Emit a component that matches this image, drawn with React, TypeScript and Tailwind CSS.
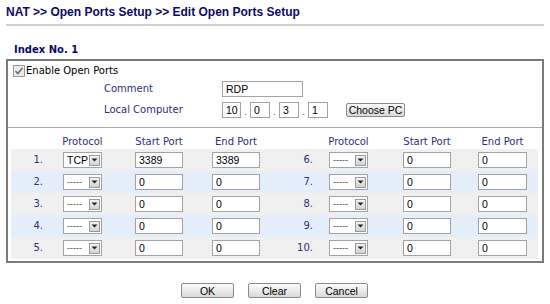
const rows = [
  [{ n: '1.', p: 'TCP', s: '3389', e: '3389' }, { n: '6.', p: '-----', s: '0', e: '0' }],
  [{ n: '2.', p: '-----', s: '0', e: '0' }, { n: '7.', p: '-----', s: '0', e: '0' }],
  [{ n: '3.', p: '-----', s: '0', e: '0' }, { n: '8.', p: '-----', s: '0', e: '0' }],
  [{ n: '4.', p: '-----', s: '0', e: '0' }, { n: '9.', p: '-----', s: '0', e: '0' }],
  [{ n: '5.', p: '-----', s: '0', e: '0' }, { n: '10.', p: '-----', s: '0', e: '0' }],
]

function Box({ value, className = '' }: { value: string; className?: string }) {
  return (
    <div className={`h-[16px] border border-[#a3a3a3] bg-white pl-[3px] font-['Liberation_Sans',Arial,sans-serif] text-[10.5px] leading-[14px] text-black ${className}`}>
      {value}
    </div>
  )
}

function Select({ value }: { value: string }) {
  return (
    <div className="flex h-[16px] w-[39px] items-center justify-between border border-[#a3a3a3] bg-white pl-[3px] pr-[1px] font-['Liberation_Sans',Arial,sans-serif] text-black">
      <span className={value === 'TCP' ? 'text-[10.5px] leading-[14px]' : 'text-[9px] leading-[14px] text-[#444]'}>{value}</span>
      <span className="flex h-[11px] w-[11px] items-center justify-center border border-[#9a9a9a] bg-linear-to-b from-[#f4f4f4] to-[#d2d2d2]">
        <svg width="7" height="4" viewBox="0 0 7 4"><path d="M0.5 0.5h6L3.5 3.5z" fill="#222" /></svg>
      </span>
    </div>
  )
}

function Btn({ label, className = '' }: { label: string; className?: string }) {
  return (
    <button className={`flex items-center justify-center whitespace-nowrap rounded-[2px] border border-[#8a8a8a] bg-linear-to-b from-[#fcfcfc] to-[#d9d9d9] p-0 font-['Liberation_Sans',Arial,sans-serif] text-[10.5px] leading-[12px] text-black ${className}`}>
      {label}
    </button>
  )
}

const label = "font-['DejaVu_Sans',Verdana,sans-serif] text-[10px] leading-[12px] text-[#2e2e7e]"
const dot = "w-[9px] self-end text-center font-['Liberation_Sans',Arial,sans-serif] text-[11px] leading-[14px] text-[#777]"

export default function App() {
  return (
    <div className="h-[304px] w-[550px] overflow-hidden bg-white">
      <div className="px-[6px] pt-[4px]">
        <h1 className="font-['Liberation_Sans',Arial,sans-serif] text-[12px] font-bold leading-[16px] text-[#0a0a64]">
          NAT &gt;&gt; Open Ports Setup &gt;&gt; Edit Open Ports Setup
        </h1>
        <div className="mt-[4px] h-[2px] w-[538px] bg-[#d0d0d0]" />
      </div>

      <p className="pl-[14px] pt-[18px] font-['DejaVu_Sans',Verdana,sans-serif] text-[10px] font-bold leading-[12px] text-[#0a0a64]">
        Index No. 1
      </p>

      <div className="mx-[6px] mt-[3px] w-[538px] border-2 border-[#7a7a7a] pb-[2px]">
        {/* enable */}
        <div className="mt-[3px] flex h-[13px] items-center pl-[5px]">
          <svg width="12" height="12" viewBox="0 0 12 12">
            <rect x="0.5" y="0.5" width="11" height="11" fill="#ececec" stroke="#9a9a9a" />
            <path d="M2.5 6l2.3 2.5L9.5 3" fill="none" stroke="#6a6a7a" strokeWidth="1.6" />
          </svg>
          <span className="ml-[1px] font-['DejaVu_Sans',Verdana,sans-serif] text-[10px] leading-[12px] text-black">Enable Open Ports</span>
        </div>

        {/* comment */}
        <div className="mt-[4px] flex h-[16px] items-center">
          <span className={`w-[214px] pl-[96px] ${label}`}>Comment</span>
          <Box value="RDP" className="w-[81px]" />
        </div>

        {/* local computer */}
        <div className="mt-[5px] flex h-[16px] items-center">
          <span className={`w-[214px] pl-[96px] ${label}`}>Local Computer</span>
          <Box value="10" className="w-[19px]" />
          <span className={dot}>.</span>
          <Box value="0" className="w-[20px]" />
          <span className={dot}>.</span>
          <Box value="3" className="w-[20px]" />
          <span className={dot}>.</span>
          <Box value="1" className="w-[20px]" />
          <Btn label="Choose PC" className="ml-[18px] h-[14px] w-[59px]" />
        </div>

        <div className="mt-[9px] h-[1px] bg-[#a8a8a8]" />

        {/* header */}
        <div className={`flex h-[21px] pl-[3px] pt-[8px] ${label}`}>
          <div className="w-[32px]" />
          <div className="ml-[20px] flex w-[39px] justify-center whitespace-nowrap">Protocol</div>
          <div className="ml-[33px] flex w-[48px] justify-center whitespace-nowrap">Start Port</div>
          <div className="ml-[29px] flex w-[48px] justify-center whitespace-nowrap">End Port</div>
          <div className="w-[53px]" />
          <div className="ml-[16px] flex w-[39px] justify-center whitespace-nowrap">Protocol</div>
          <div className="ml-[35px] flex w-[48px] justify-center whitespace-nowrap">Start Port</div>
          <div className="ml-[27px] flex w-[49px] justify-center whitespace-nowrap">End Port</div>
        </div>

        {/* rows */}
        <div className="pl-[3px] pr-[4px]">
          {rows.map((pair, i) => (
            <div key={i} className={`flex h-[22px] items-center ${i % 2 === 0 ? 'bg-[#f0f0f0]' : 'bg-[#e4eefa]'}`}>
              <div className={`w-[32px] text-right ${label}`}>{pair[0].n}</div>
              <div className="ml-[20px]"><Select value={pair[0].p} /></div>
              <Box value={pair[0].s} className="ml-[33px] w-[48px]" />
              <Box value={pair[0].e} className="ml-[29px] w-[48px]" />
              <div className={`w-[53px] text-right ${label}`}>{pair[1].n}</div>
              <div className="ml-[16px]"><Select value={pair[1].p} /></div>
              <Box value={pair[1].s} className="ml-[35px] w-[48px]" />
              <Box value={pair[1].e} className="ml-[27px] w-[49px]" />
            </div>
          ))}
        </div>
      </div>

      <div className="mt-[20px] flex gap-[14px] pl-[181px]">
        <Btn label="OK" className="h-[15px] w-[53px]" />
        <Btn label="Clear" className="h-[15px] w-[53px]" />
        <Btn label="Cancel" className="h-[15px] w-[53px]" />
      </div>
    </div>
  )
}
